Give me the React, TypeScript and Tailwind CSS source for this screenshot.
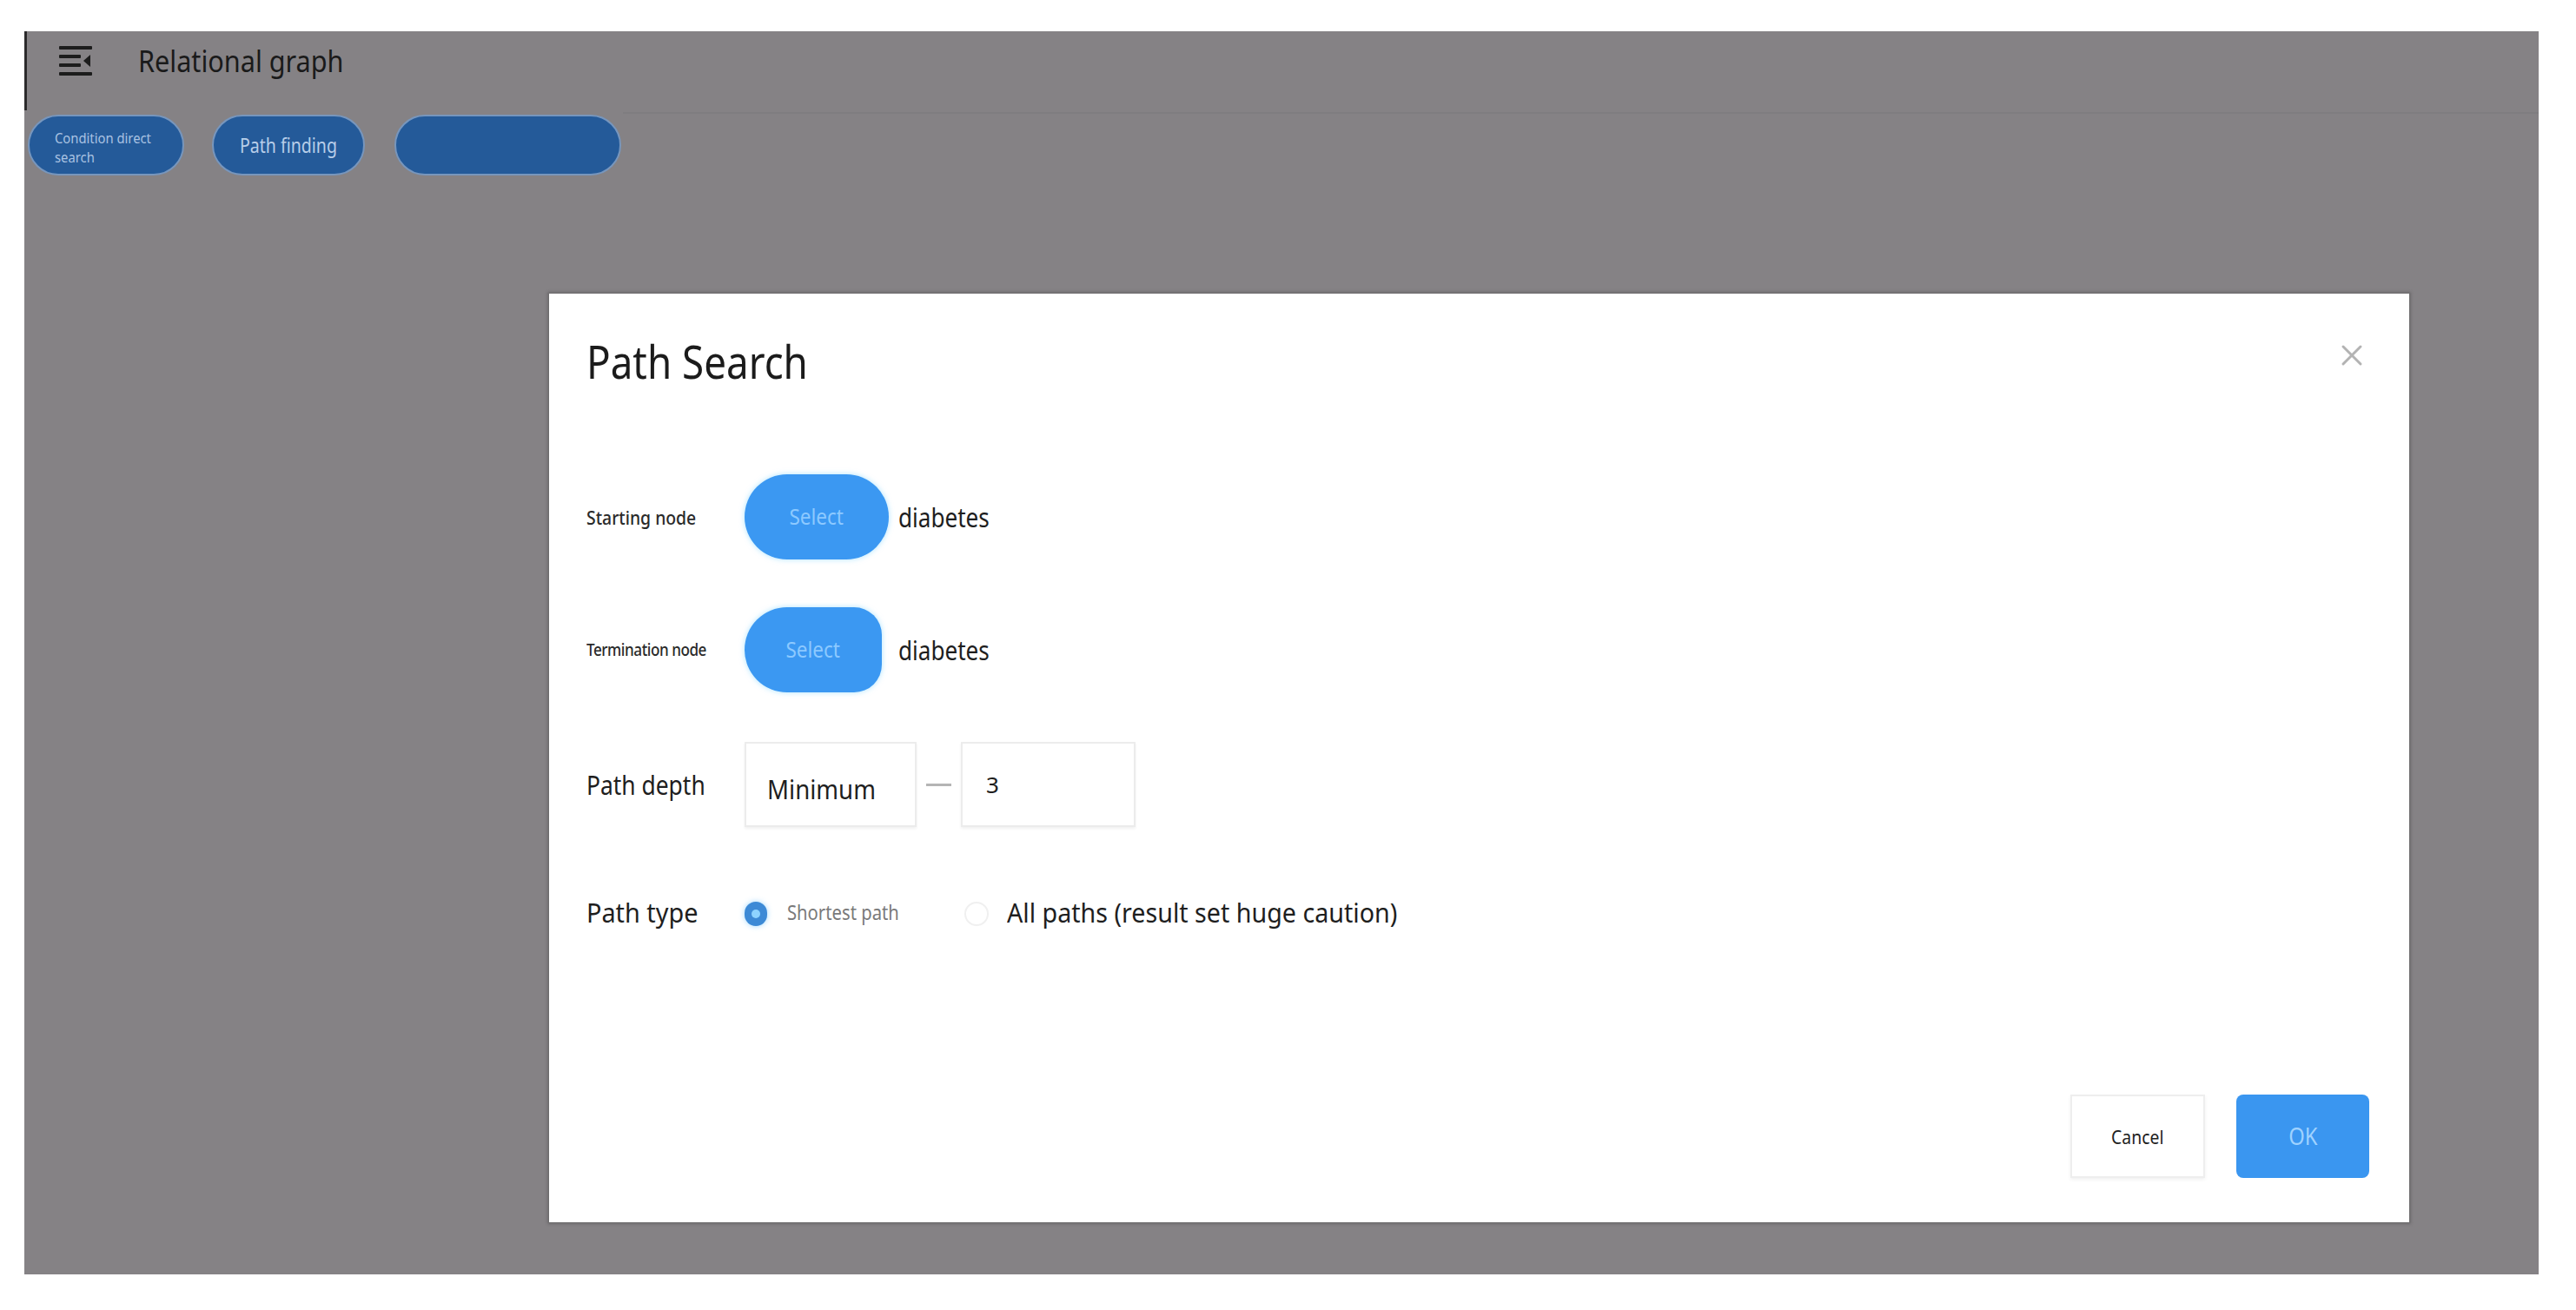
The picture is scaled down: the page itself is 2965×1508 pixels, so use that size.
import React from 'react';

const font = "font-['Noto_Sans','Open_Sans',sans-serif]";

// the screenshot text is a narrow cut; squeeze glyphs horizontally
const Narrow: React.FC<{ className?: string; children: React.ReactNode }> = ({ className = '', children }) => (
  <span className={`inline-block origin-left whitespace-nowrap ${className}`}>{children}</span>
);

const MenuFoldIcon: React.FC = () => (
  <svg width="38" height="34" viewBox="0 0 38 34" fill="#1c1c1c">
    <rect x="0" y="0" width="38" height="4" rx="1" />
    <rect x="0" y="10" width="25" height="4" rx="1" />
    <rect x="0" y="20" width="25" height="4" rx="1" />
    <polygon points="36,10 28,17 36,24" />
    <rect x="0" y="30" width="38" height="4" rx="1" />
  </svg>
);

const CloseIcon: React.FC = () => (
  <svg width="26" height="26" viewBox="0 0 26 26" stroke="#b3b3b3" strokeWidth="3" strokeLinecap="round">
    <line x1="3" y1="3" x2="23" y2="23" />
    <line x1="23" y1="3" x2="3" y2="23" />
  </svg>
);

const App: React.FC = () => {
  return (
    <div className={`w-[2965px] h-[1508px] bg-white pt-[36px] pl-[28px] ${font}`}>
      <div className="relative w-[2894px] h-[1431px] bg-[#858285]">
        {/* Header */}
        <div className="h-[91px] border-l-[3px] border-[#2b2a2b] flex items-center pb-[23px] pl-[37px]">
          <MenuFoldIcon />
          <Narrow className="ml-[53px] text-[34px] text-[#1a1a1a] leading-none scale-x-[0.9]">Relational graph</Narrow>
        </div>

        {/* Tabs */}
        <div className="flex items-start gap-[32px] pl-[4px]">
          <div className="mt-[5px] w-[180px] h-[70px] rounded-full bg-[#245a99] border-2 border-[#7796bd] flex flex-col justify-center pl-[29px] pt-[5px] text-[17px] leading-[22px] text-[#a9c2e2]">
            <Narrow className="scale-x-[0.87]">Condition direct</Narrow>
            <Narrow className="scale-x-[0.87]">search</Narrow>
          </div>
          <div className="mt-[5px] w-[176px] h-[70px] rounded-full bg-[#245a99] border-2 border-[#7796bd] flex items-center justify-center text-[23px] text-[#b8cee9]">
            <span className="inline-block scale-x-[0.85]">Path finding</span>
          </div>
          <div className="mt-[5px] ml-[2px] w-[261px] h-[70px] rounded-full bg-[#245a99] border-2 border-[#7796bd]" />
          <div className="flex-1 -ml-[30px] mt-[2px] h-[2px] bg-[#7f7d80]" />
        </div>

        {/* Modal */}
        <div className="absolute left-[604px] top-[302px] w-[2141px] h-[1069px] bg-white shadow-[0_0_3px_2px_rgba(60,60,60,0.35)] flex flex-col pl-[43px] pr-[46px]">
          <div className="flex items-start justify-between pt-[46px]">
            <h2 className="text-[52px] leading-[64px] text-[#1b1b1b]">
              <Narrow className="scale-x-[0.88]">Path Search</Narrow>
            </h2>
            <div className="mt-[12px] mr-[7px]">
              <CloseIcon />
            </div>
          </div>

          {/* Starting node */}
          <div className="mt-[98px] flex items-center h-[98px]">
            <span className="w-[182px] text-[22px] font-medium text-[#2a2a2a]">
              <Narrow className="scale-x-[0.88]">Starting node</Narrow>
            </span>
            <button className="w-[166px] h-[98px] rounded-[49px] bg-[#3b98f2] shadow-[0_0_6px_rgba(120,210,255,0.6)] text-[25px] text-[#8cc9ff]">
              <span className="inline-block scale-x-[0.9]">Select</span>
            </button>
            <Narrow className="ml-[11px] text-[30px] text-[#1e1e1e] scale-x-[0.87]">diabetes</Narrow>
          </div>

          {/* Termination node */}
          <div className="mt-[55px] flex items-center h-[98px]">
            <span className="w-[182px] text-[19px] font-medium text-[#2a2a2a] tracking-[-0.5px]">
              <Narrow className="scale-x-[0.9]">Termination node</Narrow>
            </span>
            <button className="w-[158px] h-[98px] rounded-l-[49px] rounded-r-[32px] bg-[#3b98f2] shadow-[0_0_6px_rgba(120,210,255,0.6)] text-[25px] text-[#8cc9ff]">
              <span className="inline-block scale-x-[0.9]">Select</span>
            </button>
            <Narrow className="ml-[19px] text-[30px] text-[#1e1e1e] scale-x-[0.87]">diabetes</Narrow>
          </div>

          {/* Path depth */}
          <div className="mt-[57px] flex items-center h-[98px]">
            <span className="w-[182px] text-[30px] text-[#1e1e1e]">
              <Narrow className="scale-x-[0.88]">Path depth</Narrow>
            </span>
            <div className="w-[198px] h-[98px] border-2 border-[#ececec] shadow-[0_2px_3px_rgba(0,0,0,0.06)] flex items-center pl-[24px] pt-[10px] text-[31px] text-[#1e1e1e]">
              <Narrow className="scale-x-[0.89]">Minimum</Narrow>
            </div>
            <span className="mx-[11px] w-[29px] h-[3px] bg-[#b5b5b5]" />
            <div className="w-[201px] h-[98px] border-2 border-[#ececec] shadow-[0_2px_3px_rgba(0,0,0,0.06)] flex items-center pl-[27px] text-[26px] text-[#1e1e1e]">
              3
            </div>
          </div>

          {/* Path type */}
          <div className="mt-[78px] flex items-center h-[40px]">
            <span className="w-[182px] text-[31px] text-[#1e1e1e]">
              <Narrow className="scale-x-[0.93]">Path type</Narrow>
            </span>
            <span className="mt-[4px] w-[26px] h-[28px] rounded-full bg-[#3d8ad6] shadow-[0_0_6px_rgba(120,200,255,0.7)] flex items-center justify-center">
              <span className="w-[10px] h-[10px] rounded-full bg-[#8ed3ff]" />
            </span>
            <span className="ml-[23px] w-[204px] text-[23px] text-[#7a7a7a]">
              <Narrow className="scale-x-[0.88]">Shortest path</Narrow>
            </span>
            <span className="mt-[4px] w-[28px] h-[28px] rounded-full border-2 border-[#f0f0f0]" />
            <Narrow className="ml-[21px] text-[30px] text-[#1e1e1e] scale-x-[0.955]">All paths (result set huge caution)</Narrow>
          </div>

          {/* Footer */}
          <div className="mt-auto mb-[51px] flex justify-end gap-[36px]">
            <button className="w-[155px] h-[96px] border-2 border-[#eeeeee] bg-white shadow-[0_2px_4px_rgba(0,0,0,0.06)] text-[22px] text-[#222]">
              <span className="inline-block scale-x-[0.88]">Cancel</span>
            </button>
            <button className="w-[153px] h-[96px] rounded-[8px] bg-[#3a96f0] text-[27px] text-[#9fd2ff]">
              <span className="inline-block scale-x-[0.88]">OK</span>
            </button>
          </div>
        </div>
      </div>
    </div>
  );
};

export default App;
